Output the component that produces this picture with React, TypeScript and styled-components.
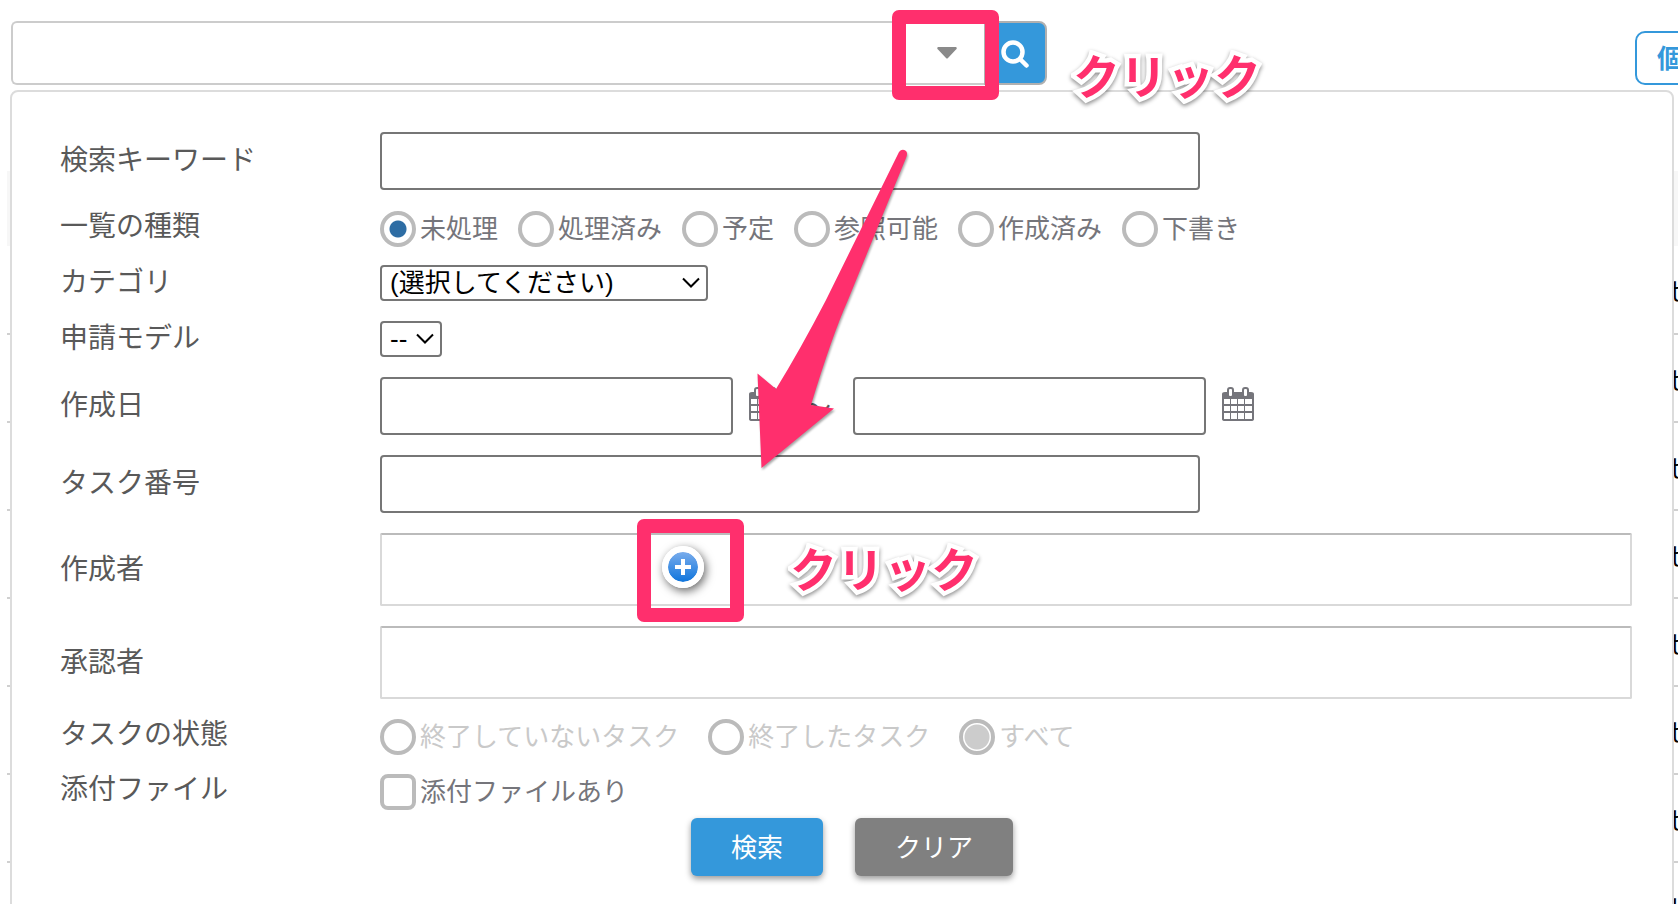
import React from "react";
import styled, { createGlobalStyle } from "styled-components";

const PINK = "#ff2f6d";
const BLUE = "#3498db";

const GlobalStyle = createGlobalStyle`
  *, *::before, *::after { box-sizing: border-box; }
  html, body { margin: 0; height: 100%; }
  body {
    background: #fff;
    overflow: hidden;
    font-family: "Liberation Sans", "Noto Sans CJK JP", sans-serif;
    font-size: 26px;
    color: #75757b;
  }
  #root { height: 100%; }
  button, input, select { font: inherit; margin: 0; }
`;

const Page = styled.div`
  position: relative;
  display: flex;
  flex-direction: column;
  height: 100vh;
  overflow: hidden;
`;

const TopBar = styled.header`
  display: flex;
  align-items: flex-start;
  justify-content: space-between;
  height: 90px;
  padding: 21px 0 0 11px;
`;

const SearchGroup = styled.form`
  display: flex;
  width: 1036px;
  height: 64px;
  flex: none;
`;

const QuickInput = styled.input`
  flex: 1;
  min-width: 0;
  border: 2px solid #ccc;
  border-right: 0;
  border-radius: 6px 0 0 6px;
  background: #fff;
  outline: 0;
`;

const ToggleButton = styled.button`
  width: 78px;
  padding: 0 0 0 4px;
  border: 2px solid #ccc;
  border-width: 2px 0;
  background: #fff;
  display: grid;
  place-items: center;
`;

const SubmitButton = styled.button`
  width: 63px;
  padding: 2px 0 0 15px;
  border: 2px solid #b0b0b0;
  border-radius: 0 8px 8px 0;
  background: ${BLUE};
  display: flex;
  align-items: center;
`;

const PersonalButton = styled.button`
  flex: none;
  width: 150px;
  height: 54px;
  margin: 10px -107px 0 0;
  padding: 0 0 4px 20px;
  border: 2px solid ${BLUE};
  border-radius: 10px;
  background: #fff;
  color: ${BLUE};
  font-weight: 700;
  text-align: left;
`;

const Content = styled.main`
  position: relative;
  flex: 1;
  min-height: 0;
`;

const TaskList = styled.table`
  width: calc(100% + 120px);
  margin: 81px 0 0 7px;
  border-collapse: collapse;
  color: #000;
  th { height: 75px; padding: 0; background: #f7f7f7; }
  td { height: 88px; padding: 0; border-bottom: 2px solid #d0d0d0; text-align: right; }
  td a { color: #000; text-decoration: none; display: inline-block; width: 138px; text-align: left; }
`;

const Panel = styled.section`
  position: absolute;
  inset: 0 4px auto 10px;
  min-height: 920px;
  padding: 40px 40px 0 48px;
  border: 2px solid #dcdcdc;
  border-radius: 8px;
  background: #fff;
`;

const Row = styled.div<{ $h: number; $gap?: number }>`
  display: grid;
  grid-template-columns: 320px 1fr;
  height: ${(p) => p.$h}px;
  margin-bottom: ${(p) => p.$gap ?? 20}px;
  align-items: center;
`;

const labelCss = `
  font-size: 28px;
  line-height: 32px;
  color: #595959;
`;
const Label = styled.label`${labelCss}`;
const Caption = styled.span<{ $lift?: boolean }>`
  ${labelCss}
  margin-bottom: ${(p) => (p.$lift ? 4 : 0)}px;
`;

const Tilde = styled.span`
  ${labelCss}
  margin: 6px 6px 0;
`;

const Field = styled.div<{ $gap?: number }>`
  display: flex;
  align-items: center;
  gap: ${(p) => p.$gap ?? 0}px;
`;

const TextInput = styled.input<{ $w: number }>`
  width: ${(p) => p.$w}px;
  height: 58px;
  border: 2px solid #767676;
  border-radius: 4px;
  background: #fff;
  padding: 0 8px;
  outline: 0;
`;

const SelectWrap = styled.span<{ $w: number }>`
  display: grid;
  width: ${(p) => p.$w}px;
  height: 36px;
  align-items: center;
  > * { grid-area: 1 / 1; }
  > svg { justify-self: end; margin-right: 8px; pointer-events: none; }
`;

const Select = styled.select`
  appearance: none;
  width: 100%;
  height: 36px;
  padding: 0 0 0 8px;
  border: 2px solid #767676;
  border-radius: 4px;
  background: #fff;
  color: #000;
  line-height: 30px;
`;

const Choice = styled.label<{ $off?: boolean }>`
  display: flex;
  align-items: center;
  gap: 4px;
  line-height: 36px;
  white-space: nowrap;
  color: ${(p) => (p.$off ? "#c9c9c9" : "#75757b")};
`;

const Radio = styled.input`
  appearance: none;
  width: 36px;
  height: 36px;
  border: 4px solid #bbb;
  border-radius: 50%;
  background: #fff;
  &:checked { background: radial-gradient(circle, #2e6da4 0 8px, #fff 9px); }
  &:checked:disabled { background: radial-gradient(circle, #ccc 0 12px, #fff 13px); }
`;

const Checkbox = styled.input`
  appearance: none;
  width: 36px;
  height: 36px;
  border: 4px solid #bbb;
  border-radius: 8px;
  background: #fff;
`;

const IconButton = styled.button`
  display: grid;
  padding: 0 0 4px;
  border: 0;
  background: none;
  color: #75757b;
`;

const UserBox = styled.div`
  display: flex;
  align-items: center;
  height: 73px;
  padding: 0 0 6px 280px;
  border: 2px solid #d9d9d9;
  border-top-color: #bbb;
  border-radius: 2px;
`;

const AddButton = styled.button`
  display: grid;
  place-items: center;
  width: 42px;
  height: 42px;
  padding: 0;
  border: 6px solid #fff;
  border-radius: 50%;
  background: linear-gradient(#79acec, #0f75dc) padding-box;
  box-shadow: 2px 3px 10px rgba(0, 0, 0, 0.6);
`;

const Actions = styled.div`
  display: flex;
  justify-content: center;
  gap: 32px;
  padding-left: 12px;
`;

const ActionButton = styled.button<{ $bg: string }>`
  height: 58px;
  padding: 0 40px 4px;
  border: 0;
  border-radius: 6px;
  background: ${(p) => p.$bg};
  color: #fff;
  box-shadow: 0 3px 6px rgba(0, 0, 0, 0.4);
`;

/* Tutorial annotations laid over the page */
const Marks = styled.div`
  position: absolute;
  inset: 0;
  pointer-events: none;
`;

const Frame = styled.div<{ $x: number; $y: number; $h: number }>`
  position: absolute;
  left: ${(p) => p.$x}px;
  top: ${(p) => p.$y}px;
  width: 107px;
  height: ${(p) => p.$h}px;
  border: 14px solid ${PINK};
  border-radius: 7px;
`;

const Note = styled.span<{ $x: number; $y: number }>`
  position: absolute;
  left: ${(p) => p.$x}px;
  top: ${(p) => p.$y}px;
  font-size: 47px;
  line-height: 48px;
  font-weight: 700;
  color: ${PINK};
  -webkit-text-stroke: 9px #fff;
  paint-order: stroke fill;
  stroke-linejoin: round;
  filter: drop-shadow(0 2px 2px rgba(0, 0, 0, 0.45));
`;

const Arrow = styled.svg`
  position: absolute;
  left: 740px;
  top: 140px;
  filter: drop-shadow(1px 2px 1px rgba(0, 0, 0, 0.35));
`;

const Chevron = () => (
  <svg width="18" height="12" viewBox="0 0 18 12" fill="none" stroke="#000" strokeWidth="2">
    <path d="M1 1.5 9 9.5 17 1.5" />
  </svg>
);

const Calendar = () => (
  <svg width="32" height="36" viewBox="0 0 32 36">
    <path
      fill="currentColor"
      fillRule="evenodd"
      d="M3 6H29Q32 6 32 8V33Q32 35 29 35H3Q0 35 0 33V8Q0 6 3 6ZM2 13V18H8V13ZM9 13V18H15V13ZM16 13V18H22V13ZM23 13V18H30V13ZM2 20V25H8V20ZM9 20V25H15V20ZM16 20V25H22V20ZM23 20V25H30V20ZM2 27V33H8V27ZM9 27V33H15V27ZM16 27V33H22V27ZM23 27V33H30V27Z"
    />
    <g fill="#fff" stroke="currentColor" strokeWidth="2">
      <rect x="6" y="2" width="5" height="9" rx="2" />
      <rect x="21" y="2" width="5" height="9" rx="2" />
    </g>
  </svg>
);

const kinds = ["未処理", "処理済み", "予定", "参照可能", "作成済み", "下書き"];
const states = ["終了していないタスク", "終了したタスク", "すべて"];

export default function App() {
  return (
    <Page>
      <GlobalStyle />
      <TopBar>
        <SearchGroup onSubmit={(e) => e.preventDefault()}>
          <QuickInput aria-label="検索" />
          <ToggleButton type="button" aria-label="詳細検索">
            <svg width="20" height="12" viewBox="0 0 20 12">
              <path d="M1 0H19Q20.5 1 19 2.5L11 11Q10 12 9 11L1 2.5Q-.5 1 1 0Z" fill="#8a8a8a" />
            </svg>
          </ToggleButton>
          <SubmitButton aria-label="検索">
            <svg width="28" height="28" viewBox="0 0 28 28" fill="none" stroke="#fff" strokeLinecap="round">
              <circle cx="12" cy="12" r="9.5" strokeWidth="4.5" />
              <path d="M19 19 25.5 25.5" strokeWidth="4.5" />
            </svg>
          </SubmitButton>
        </SearchGroup>
        <PersonalButton type="button">個人設定</PersonalButton>
      </TopBar>

      <Content>
        <TaskList>
          <thead><tr><th /></tr></thead>
          <tbody>
            {[0, 1, 2, 3, 4, 5, 6, 7].map((n) => (
              <tr key={n}><td><a href="#task">せ</a></td></tr>
            ))}
          </tbody>
        </TaskList>

        <Panel>
          <Row $h={58} $gap={21}>
            <Label htmlFor="keyword">検索キーワード</Label>
            <Field><TextInput id="keyword" $w={820} /></Field>
          </Row>
          <Row $h={36} $gap={18}>
            <Caption $lift>一覧の種類</Caption>
            <Field $gap={20} role="radiogroup" aria-label="一覧の種類">
              {kinds.map((k, i) => (
                <Choice key={k}><Radio type="radio" name="kind" defaultChecked={i === 0} />{k}</Choice>
              ))}
            </Field>
          </Row>
          <Row $h={36}>
            <Label htmlFor="category">カテゴリ</Label>
            <SelectWrap $w={328}>
              <Select id="category"><option>(選択してください)</option></Select>
              <Chevron />
            </SelectWrap>
          </Row>
          <Row $h={36}>
            <Label htmlFor="model">申請モデル</Label>
            <SelectWrap $w={62}>
              <Select id="model"><option>--</option></Select>
              <Chevron />
            </SelectWrap>
          </Row>
          <Row $h={58}>
            <Label htmlFor="from">作成日</Label>
            <Field $gap={16}>
              <TextInput id="from" $w={353} />
              <IconButton type="button" aria-label="開始日を選択"><Calendar /></IconButton>
              <Tilde>～</Tilde>
              <TextInput aria-label="終了日" $w={353} />
              <IconButton type="button" aria-label="終了日を選択"><Calendar /></IconButton>
            </Field>
          </Row>
          <Row $h={58}>
            <Label htmlFor="number">タスク番号</Label>
            <Field><TextInput id="number" $w={820} /></Field>
          </Row>
          <Row $h={73}>
            <Caption>作成者</Caption>
            <UserBox>
              <AddButton type="button" aria-label="作成者を追加">
                <svg width="16" height="16" viewBox="0 0 16 16"><path d="M6 0h4v6h6v4h-6v6H6v-6H0V6h6z" fill="#fff" /></svg>
              </AddButton>
            </UserBox>
          </Row>
          <Row $h={73}>
            <Caption>承認者</Caption>
            <UserBox />
          </Row>
          <Row $h={36} $gap={19}>
            <Caption $lift>タスクの状態</Caption>
            <Field $gap={29} role="radiogroup" aria-label="タスクの状態">
              {states.map((s, i) => (
                <Choice key={s} $off><Radio type="radio" name="state" disabled defaultChecked={i === 2} />{s}</Choice>
              ))}
            </Field>
          </Row>
          <Row $h={36} $gap={8}>
            <Caption $lift>添付ファイル</Caption>
            <Field><Choice><Checkbox type="checkbox" />添付ファイルあり</Choice></Field>
          </Row>
          <Actions>
            <ActionButton type="submit" $bg={BLUE}>検索</ActionButton>
            <ActionButton type="button" $bg="#808080">クリア</ActionButton>
          </Actions>
        </Panel>
      </Content>

      <Marks>
        <Frame $x={892} $y={10} $h={90} />
        <Note $x={1073} $y={54}>クリック</Note>
        <Arrow width="110" height="340" viewBox="740 140 110 340" overflow="visible">
          <path
            fill={PINK}
            d="M899 152Q902 148 906 151Q908 153 906 158L848 300Q832 336 811 405L834 408.5 761.5 468 757.5 373.5 776 389Q800 350 826 300Z"
          />
        </Arrow>
        <Frame $x={637} $y={519} $h={103} />
        <Note $x={790} $y={547}>クリック</Note>
      </Marks>
    </Page>
  );
}
